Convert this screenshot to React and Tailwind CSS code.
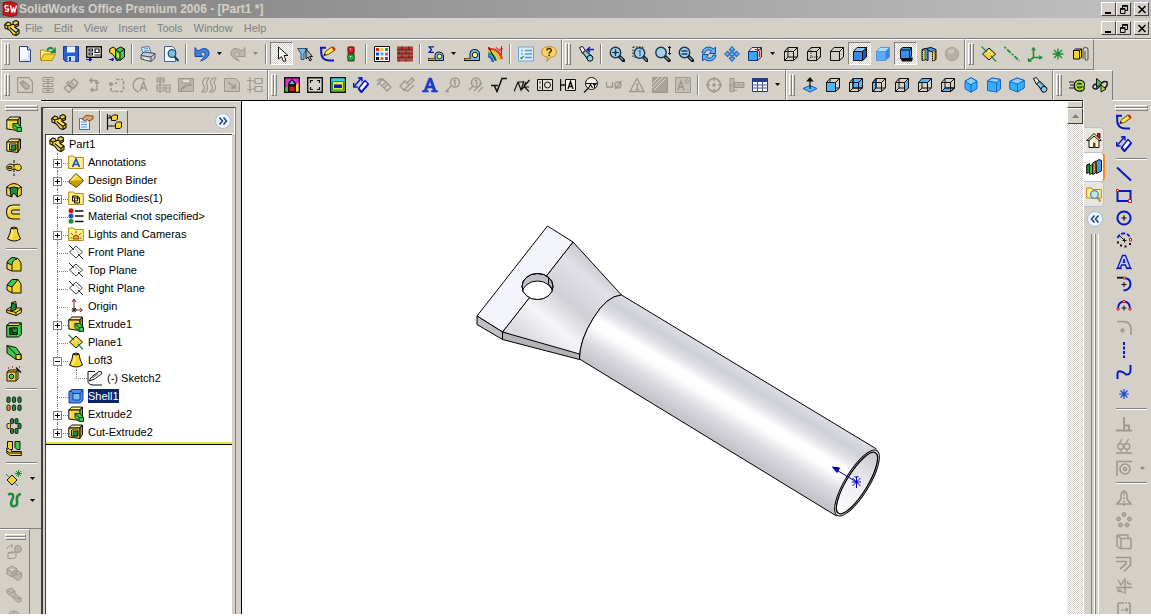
import React from "react";

const K = "#101010";
const Y = "#f4d430";
const YL = "#fff08c";
const YD = "#c89a10";
const B = "#1e50c8";
const BL = "#58b4ff";
const N = "#0a18c0";
const G = "#1e8c3c";
const GL = "#40c850";
const R = "#d01818";
const D = "#9c988e";

function Cube({ f = "none", t = "none", s = "none", wire = false, dash, c = K, back = "none", left = "none", bottom = "none" }) {
  return (
    <g stroke={c} strokeLinejoin="round">
      {back !== "none" && <path d="M5 1.500h9.500v9.500H5z" fill={back} />}
      {left !== "none" && <path d="M1.500 5.500L5 1.500V11L1.500 15z" fill={left} />}
      {bottom !== "none" && <path d="M1.500 14.500L5 11h9.500L11 14.500z" fill={bottom} />}
      {wire && <path d="M5 1.500V11h9.500M5 11L1.500 14.500" strokeDasharray={dash} strokeWidth={dash ? 0.8 : 1} />}
      <path d="M1.500 5.500h9v9h-9z" fill={f} />
      <path d="M1.500 5.500L5 1.500h9.500L10.500 5.500z" fill={t} />
      <path d="M10.500 5.500l4-4V11l-4 3.500z" fill={s} />
    </g>
  );
}

function Lens({ children, x = 6.5, y = 6.5 }) {
  return (
    <g>
      <path d={`M${x + 3.5} ${y + 3.5}l4.500 4.500`} stroke={K} strokeWidth="3.400" strokeLinecap="round" />
      <path d={`M${x + 4.5} ${y + 4.5}l3 3`} stroke="#5c9ab0" strokeWidth="1.400" />
      <circle cx={x} cy={y} r="5.200" fill="#a4d0ec" stroke="#18384c" strokeWidth="1.400" />
      {children}
    </g>
  );
}

const tape = (
  <g>
    <path d="M6 14.500V7.500q0-3.500 3.500-4H11q4.500.5 4.500 4.500v6.500z" fill="#78b8e8" stroke={K} />
    <circle cx="11" cy="9" r="2.700" fill={YL} stroke={K} strokeWidth=".9" />
    <path d="M0 13.500h7" stroke={K} strokeWidth="3" />
    <path d="M.5 13.200h6.500" stroke={Y} strokeWidth="1.200" />
  </g>
);

const tapeSum = (
  <g>
    <path d="M7 14.500V9.500q0-3 3-3.500h1.500q4 .5 4 4v4.500z" fill="#78b8e8" stroke={K} />
    <circle cx="11.500" cy="10.500" r="2.300" fill={YL} stroke={K} strokeWidth=".8" />
    <path d="M0 13.500h8" stroke={K} strokeWidth="3" />
    <path d="M.5 13.200h7" stroke={Y} strokeWidth="1.200" />
    <path d="M6 .8H1.200L3.500 3.500 1.200 6.300H6" stroke={N} strokeWidth="1.300" />
  </g>
);

const pencilArc = (
  <g>
    <path d="M0 1.800h6M1.200 2v4.500q0 7.500 8 8H14" stroke={N} strokeWidth="2" />
    <path d="M4 9.500l1.500-4L12 .8l3 3.200-6.500 4.500z" fill={Y} stroke="#7a4a10" />
    <path d="M6 7.500l6-4.500" stroke={YL} strokeWidth="1.200" />
    <path d="M12.500 1l2.500 3" stroke={R} strokeWidth="2" />
    <path d="M3.500 10l2.500-1-1.500-2z" fill={K} />
  </g>
);

const part = (
  <g stroke={K} strokeLinejoin="round" strokeWidth="1.100">
    <path d="M.8 4.500l3-2.500 2.700 1 .5 2 2-.7V2l3-1.500 2.500 1.500v3.500L11 7.500l4 2.500v3.500l-3 2-3-1L5.500 10 1 8z" fill={Y} />
    <path d="M.8 4.500l3 1.500L7 5M3.800 6v3M9 4.300l2.500 1 3-1.800M11 5v2.500M6 7.500l6 5 3-2.500M12 12.500v3" fill="none" />
    <path d="M7.500 7l5 4" stroke={YL} strokeWidth="1.300" />
  </g>
);

const boxY = (
  <g stroke={K} strokeLinejoin="round">
    <path d="M.8 4l3-3h10.500L12 4z" fill={YL} />
    <path d="M.8 4H12v10.500L.8 13z" fill={Y} />
    <path d="M12 4l2.500-3v9.500L12 14z" fill={YD} />
    <path d="M2.500 5.500v6" stroke={YL} strokeWidth="1.300" />
  </g>
);

const folder = <path d="M.7 14.500V2h5l1 1.500h8.600v11z" fill={YL} stroke="#b88a10" />;
const bigPlane = (fill, c) => <path d="M8 2l6.500 6L8 14 1.500 8z" fill={fill} stroke={c} />;
const undoPath = "M1 1.500v9h8L6.300 7.700Q8.500 5 10.800 6.800 12.500 9.800 6.500 15 15.800 12 15 6 12.500-.5 4 5z";

const flash = (
  <g>
    <path d="M1.500 1.500l3-1 3.500 5-3.500 2z" fill="#e8f4ff" stroke={K} />
    <path d="M4.500 6.500l3.300-2.300 7.200 7-4 4z" fill="#5c9ab8" stroke={K} />
    <path d="M6.500 6.500l4.500 4.500" stroke="#a4e0ff" strokeWidth="1.300" />
    <circle cx="12" cy="12.300" r="2.900" fill="#88d0f0" stroke={K} />
  </g>
);

const icons = {
  part,
  logo: (
    <g>
      <path d="M1 1.500l8-1 6 2V14l-5.500 2L1 14z" fill="#c41414" stroke="#7c0808" strokeWidth=".6" />
      <path d="M6.500 5Q3 3.500 3 6t3.500 2Q7 11.500 3 10M8.500 4.500l1.500 7 1.500-5 1 5 2-7" stroke="#fff" strokeWidth="1.400" />
    </g>
  ),
  new: <g><path d="M2.500.5h8l3 3.500v11.500h-11z" fill="#f4faff" stroke="#2c4470" /><path d="M10.500.5V4h3" fill="#c4dcf4" stroke="#2c4470" /><path d="M12 6v8H5" stroke="#c4dcf4" strokeWidth="1.500" /></g>,
  open: (
    <g>
      <path d="M.5 14V4h4l1 1.500h6V8" fill={YL} stroke="#b88a10" />
      <path d="M.5 14.500L4 8h11.500L12 14.500z" fill={Y} stroke="#b88a10" />
      <path d="M7 4.500q3-4.500 6-1.500" stroke={G} strokeWidth="2.200" /><path d="M15.800 1v6h-6z" fill={G} />
    </g>
  ),
  save: <g><path d="M.5.5h15v15h-13l-2-2z" fill="#2860d0" stroke="#143c90" /><path d="M4 .5h8v6H4z" fill="#e8f4ff" /><path d="M4.500 10h7.500v5.500H4.500z" fill="#c4dcf4" /><path d="M6 11h2v4H6z" fill="#143c90" /></g>,
  mkdraw: <g stroke={K}><path d="M.7.700h14.600v10.600H.7z" fill="#fff" strokeWidth="1.400" /><path d="M3 3h3.500v2H3zM3 7h3.500v2H3zM9 3h4v3.500H9zM8.500 9h6" strokeWidth="1.200" /><path d="M0 13.500h5M3.500 11.800l2.500 1.700-2.500 1.700z" stroke={N} fill={N} /></g>,
  mkasm: (
    <g stroke={K} strokeLinejoin="round">
      <path d="M.7 3l3.300-2 3 2v3l3 3v4.500l-2 1.500-4-6.500-3.300-2z" fill={Y} />
      <path d="M6.500 4l5-3 4 2v8L11 14.500 6.500 12z" fill={GL} /><path d="M6.500 4l4.500 2.500L15.500 3M11 6.500v8" />
      <path d="M8 7l2 1v4L8 11z" fill={Y} stroke="none" />
      <path d="M0 13.500h4M3 12l2 1.500L3 15z" stroke={N} fill={N} />
    </g>
  ),
  print: (
    <g strokeLinejoin="round">
      <path d="M3 7L1.500 1.500 9 .5l2 6.500z" fill="#d8ecff" stroke="#4878a8" /><path d="M4 3l4-.5M4.500 5l4.500-.5" stroke="#4898d8" />
      <path d="M1 9l3-3 11 1.500V12l-4 3.500-10-2.500z" fill="#c8ccd4" stroke="#40485c" /><path d="M1 9.500l10 1.500 4-3.500M11 11v4" stroke="#40485c" /><path d="M4 12.500l5 1" stroke="#fff" />
    </g>
  ),
  preview: <g><path d="M1.500.5h8l3 3v12h-11z" fill="#f4faff" stroke="#4860a0" /><path d="M11.500 10.500l4 4.500" stroke="#1c3c64" strokeWidth="2.200" /><circle cx="9" cy="7.500" r="3.800" fill="#7cc0e8" stroke="#28506c" strokeWidth="1.300" /></g>,
  undo: <path d={undoPath} fill="#3c84e0" stroke="#1848a0" />,
  redo: <path d={undoPath} transform="translate(16 0) scale(-1 1)" fill="#bab6ae" stroke={D} />,
  select: <path d="M4.500 1v12l3-2.500 2 5 2.500-1-2-5h4z" fill="#fff" stroke={K} />,
  filter: <g><path d="M.5 2.500h10L7 7.500v6H4v-6z" fill="#7cb8e0" stroke="#28507c" /><path d="M9 3v10l2-2 1.800 4 1.700-1-1.800-3.500H15.500z" fill="#b0b8c0" stroke={K} /></g>,
  sketch: pencilArc,
  light: <g><path d="M4.500.5h7v15h-7z" fill="#604c28" /><circle cx="8" cy="4" r="3.200" fill="#e82020" stroke="#600" strokeWidth=".7" /><circle cx="8" cy="11.500" r="3.400" fill="#20b040" stroke="#043c0c" strokeWidth=".7" /><path d="M7 3h1M7 10.500h1" stroke="#fff" /></g>,
  palette: (
    <g><path d="M.5.5h15v15H.5z" fill="#fff" stroke={K} />
      {["#e02020", "#f0d020", "#20a040", "#2040e0", "#20c0d0", "#e040c0", "#101010", "#d07020", "#8030c0"].map((c, i) => (
        <path key={c} d={`M${2 + (i % 3) * 4.5} ${2 + Math.floor(i / 3) * 4.5}h3v3h-3z`} fill={c} />
      ))}
    </g>
  ),
  bricks: <g><path d="M0 .5h16v15H0z" fill="#b04030" /><path d="M0 4h16M0 8h16M0 12h16M5 .5V4M12 .5V4M2 4v4M9 4v4M5 8v4M12 8v4M2 12v3.500M9 12v3.500" stroke="#40201c" /><path d="M0 5h16M0 9h16M0 13h16" stroke="#d88478" strokeWidth=".6" /></g>,
  measure: tapeSum,
  mass: tape,
  rainbow: (
    <g strokeWidth="2.400">
      <path d="M1 3q11-1 14 10" stroke="#e04020" /><path d="M1 5q9-1 11.500 9" stroke="#f0c020" /><path d="M1 7.500q6 0 8 7.500" stroke="#20a050" /><path d="M1 10q4 1 5 6" stroke="#2060d0" />
      <path d="M9 1.500l6 4.500M14.500 0v9M12.500 3h4" stroke={R} strokeWidth="1" /><path d="M1.500 1l7 13" stroke={K} strokeWidth="1" />
    </g>
  ),
  options: <g><path d="M.5 1h15v14H.5z" fill="#dceefc" stroke="#6ca4d8" /><path d="M7 4.500h7M7 8h7M7 11.500h7" stroke="#5898d8" strokeWidth="1.400" /><path d="M2.500 11.500l1 1 2-2.500" stroke={G} strokeWidth="1.200" /><path d="M3 3.500h2v2H3zM3 7h2v2H3z" fill="#88b8e0" /></g>,
  help: <g><path d="M8 .7c5 0 7.300 2 7.300 5.300S13 11 9.500 11.300L6 15.300 6.500 11C3 10.500.7 9 .7 6S3 .7 8 .7z" fill="#f8d468" stroke="#c08c20" /><path d="M5.800 4.500c0-3 4.700-2.500 4.500 0-.2 1.500-2.100 1.300-2.100 3.200M8.200 8.600v1.600" stroke="#483008" strokeWidth="1.600" /></g>,
  prev: <g>{flash}<path d="M9 3.500h7M12 1L9.300 3.500 12 6" stroke={N} strokeWidth="1.400" /></g>,
  zoomfit: <Lens><path d="M6.500 3v7M3 6.500h7" stroke="#18384c" strokeWidth="1.200" /><path d="M6.500 4.500l2 2-2 2-2-2z" fill="#18384c" /></Lens>,
  zoomarea: <g><path d="M1 1h10v10H1z" stroke={K} strokeDasharray="1.500 1.500" /><Lens x={7.5} y={7}><path d="M6.500 5.500l1.500-1V10" stroke="#2868a8" strokeWidth="1.300" /></Lens></g>,
  zoominout: <g><Lens x={6} /><path d="M14.500 .5v8M13 2L14.500.5 16 2M13 7L14.500 8.500 16 7" stroke={K} /></g>,
  zoomsel: <Lens><path d="M3.500 5h6M3.500 8h6" stroke="#183c58" strokeWidth="1.500" /></Lens>,
  rotate: <g fill={BL} stroke="#184898"><path d="M1 7C1.500 1 8.500-.5 12.500 3l2-2V7.500H8.500L10.500 5C7.500 3 4.500 4 4 7z" /><path d="M15 9c-.5 6-7.500 7.500-11.500 4l-2 2V8.500h6L5.500 11C8.500 13 11.500 12 12 9z" /></g>,
  pan: <path d="M8 .5L11 4H9v3h3V5l3.500 3L12 11V9H9v3h2l-3 3.500L5 12h2V9H4v2L.5 8 4 5v2h3V4H5z" fill={BL} stroke="#184898" strokeWidth=".9" />,
  views: <g><Cube f="#38a4ff" s="#e8b8b0" t="#f4e4e0" c="#203060" /><path d="M10.500 1v5M8 3.500h6M12.500 5v6" stroke={R} /></g>,
  wire: <Cube wire />,
  hidvis: <Cube wire dash="1.500 1" />,
  hidrem: <Cube />,
  shadeedge: <Cube f="#3888e8" t="#8cc8ff" s="#1858b0" />,
  shade: <Cube f="#58acf8" t="#b0dcff" s="#3c84d8" c="#5098e0" />,
  shadow: <g><path d="M2 11.500h13l-1 4H4z" fill={K} /><path d="M2.500 4l2-2.500h9V10l-2 2.500h-9z" fill="#3c8cec" stroke={K} /><path d="M2.500 4h9l2-2.500M11.500 4v8.500" stroke={K} /></g>,
  section: <g stroke={K}><path d="M5 2.500q5-2.500 10 1v10l-3.500 1.500V6Q8 4 5 5.500z" fill="#4898e8" /><path d="M1 3.500q3-2 6 0v11q-3-2-6 0z" fill="#4898e8" /><path d="M1.500 4h2.500v10H1.500zM11.500 5H14v9.500h-2.500z" fill={Y} strokeDasharray="1 1" /></g>,
  sphere: <g><circle cx="8" cy="8" r="6.800" fill="#b4b0a8" stroke="#a8a49c" /><ellipse cx="7" cy="5.500" rx="3" ry="2.200" fill="#cac6be" /></g>,
  plane: <g>{bigPlane(Y, K)}<path d="M.5.500L6 6M10 10l5 5.500" stroke={G} strokeWidth="1.200" /><path d="M5 8l3-3 3 3" stroke="#fff" /></g>,
  axis: <path d="M.5 1L15.500 15" stroke={G} strokeWidth="1.800" strokeDasharray="2 1.500 5 1.500" />,
  coord: <g stroke={G} strokeWidth="1.600"><path d="M6.500 2v9.500h8M6.500 11.500L2 15" /><path d="M4.500 4l2-3 2 3zM12.500 9.500l3 2-3 2zM1 12v3.500h3.500z" fill={G} strokeWidth=".5" /></g>,
  point: <path d="M8 2.500v11M2.500 8h11M4 4l8 8M12 4l-8 8" stroke={G} strokeWidth="1.400" />,
  attach: <g stroke={K}><path d="M.5 4.500L2.500 3h6v8l-2 2h-6z" fill={Y} /><path d="M.5 4.500h6V13M6.500 4.500l2-1.500" /><path d="M10 13V3q2.500-3.500 5 0v10q-1.700 2.500-3 0V5" stroke="#606060" strokeWidth="1.200" /></g>,

  g1: <g stroke={D} strokeWidth="1.200"><path d="M.6.600h11l3.800 4v10.800H.6z" /><path d="M3 5.500l3-1.500 6 4.500v3l-3 1-5-5zM6 4.500v3" fill="#b8b4ac" /></g>,
  g2: <g stroke={D}><path d="M3 .5h10v4H3zM3 6.500h10v3H3zM3 11.500h10v4H3z" /><path d="M5 2.500h6M5 13.500h6M8 0v16" /></g>,
  g3: <path d="M1 11l4-3 4 4-3 3.500zM6 7l5-5 4 4-5 5zM3 7l3-3M10 12l4-4M8 5l3 3" stroke={D} strokeWidth="1.400" />,
  g4: <path d="M4 3.500h7v3M9 5l2 2 2-2M11 8v5H5M7 11l-2 2 2 2M6 1L4 3.500 6 6" stroke={D} strokeWidth="1.400" />,
  g5: <path d="M7 2.500h7M14.500 4v9.500M6 14.500h8M2 6v8.500h3M0 8l2-3 2 3M7 5v2" stroke={D} strokeWidth="1.600" strokeDasharray="3.500 1.500" />,
  g6: <g stroke={D} strokeWidth="1.400"><path d="M13 3A7 7 0 1 0 7 15" /><path d="M8 14l3.500-9L15 14M9.500 11h4" /></g>,
  g7: <g stroke={D} strokeWidth="1.200"><path d="M2 1h7v4H2zM2 8h7v6H2zM5 0v16M11 8h4v7h-4zM11 11h4" /><path d="M2 3h7M2 11h7" /></g>,
  g8: <g stroke={D}><path d="M.5 1.500h15v13H.5z" fill="#bcb8b0" /><path d="M4 2h8v4H4z" fill="#e0dcd4" /><path d="M2 14q5-7 12-6" strokeWidth="1.600" /></g>,
  g9: <path d="M4 1q-4 4-1.500 7T1 15h4q2.500-4 1-7T8 1zM12 1q-4 4-1.500 7T9 15h3q4-4 2-7t1-7z" stroke={D} strokeWidth="1.200" />,
  g10: <g stroke={D}><path d="M.5 1.500h11l4 4v9H.5z" fill="#c4c0b8" /><path d="M4 5l7 6M11 7v4H7" strokeWidth="1.400" /></g>,
  g11: <path d="M3 0v16M0 3.500h5M0 12.500h5M8 1.500h7v5H8zM8 9.500h7v5H8zM5 4h3M5 12h3" stroke={D} strokeWidth="1.200" />,

  m1: <g><path d="M.7.700h14.600v14.600H.7z" fill="#f020e0" stroke={K} strokeWidth="1.400" /><path d="M1.400 10h3v4.600h-3z" fill="#40c040" /><path d="M11.500 8l3-2v8.600h-3z" fill="#f0e020" /><path d="M4 15V6l4-4 4 4v9z" fill={K} /><path d="M5.500 7L8 3.500 10.500 7z" fill="#30d8f0" /><path d="M5.500 9.500h5V14h-5z" fill={R} /></g>,
  m2: <g stroke={K}><path d="M.7.700h14.600v14.600H.7z" strokeWidth="1.400" fill="#d8d4cc" /><path d="M3.500 6V3.500h2.500M10 3.500h2.500V6M12.500 10v2.500H10M6 12.500H3.500V10" strokeWidth="1.200" /></g>,
  m3: <g><path d="M.7.700h14.600v14.600H.7z" fill="#90e838" stroke={K} strokeWidth="1.400" /><path d="M1.500 1.500h13v3h-13z" fill="#38d0f0" /><path d="M2.500 4.500h11v8.500h-11z" fill="#f0e838" stroke={G} /><path d="M4 7.500h8v3.500H4z" fill={N} /></g>,
  smartdim: (
    <g stroke={N} strokeLinejoin="round">
      <path d="M5.500 11.500l6.500-8 3.300 3.500-7 8.200z" fill="#fff" strokeWidth="1.300" />
      <path d="M5.500 11.500l3 3.700 6.800-8.200" strokeWidth="2" />
      <path d="M1.500 9L8 1.500" strokeWidth="1.400" />
      <path d="M.7 6v4h4M5 1l3.800-.3L9 4.500" strokeWidth="1.500" />
    </g>
  ),
  m5: <path d="M1 8l5-6 2 2M3 6l8 8 4-4-8-8M6 9l4-4M8 11l4-4M1 4l4-3" stroke={D} strokeWidth="1.300" />,
  m6: <path d="M1 9l5-5 4 4-5 5zM8 6l5-5 2 2-6 6M5 13l4 1 6-6" stroke={D} strokeWidth="1.300" />,
  note: <path d="M7 1h2.500l4.500 12.500h1.500V15H9.500v-1.500h1.700L10.300 11H5.500l-.9 2.500h1.700V15H.5v-1.500h1.600zM6.200 9h3.500L8 4.200z" fill="#1a3cd0" stroke="#1a3cd0" strokeWidth=".6" />,
  m8: <g stroke={D} strokeWidth="1.400"><circle cx="10" cy="5.500" r="4.500" /><path d="M8.500 4l1.500-1v5.500M6.500 8.500L1 14.500h3" /></g>,
  m9: <g stroke={D} strokeWidth="1.400"><circle cx="8" cy="5.500" r="4.500" /><path d="M7 4l1.500-1v5.500M5 9l-4 4M6 14l8-8M10 15l5-5" /></g>,
  finish: <path d="M3.500 9l2.500 5.500L11 1.500h5M0 8.500h7" stroke={K} strokeWidth="1.500" />,
  weld: <path d="M0 14.500L4 5h6M4 5l3 8L10 4M7 13l3-3h5M15.500 3L10 9.500l5 5M12 5l-2 4" stroke={K} strokeWidth="1.200" />,
  m12: <g stroke={K}><path d="M.5 2.500h15v11H.5zM5.500 2.500v11" fill="#e4e0d8" /><circle cx="10.500" cy="8" r="3" /><path d="M3 4.500v2M3 9.500v2" /></g>,
  datum: <g stroke={K}><path d="M5.500 2.500h10v11h-10z" fill="#f4f0e8" /><path d="M.5 2v12M0 8h5.500M8 12l2.500-7.500L13 12M9 9.500h3" strokeWidth="1.400" /></g>,
  datumt: <g stroke={K}><circle cx="8.500" cy="6.500" r="6" fill="#f4f0e8" /><path d="M2.500 6.500h12M5 11.500L1 15.500M5.500 11L7.500 7.500l2 3.500M11.500 7.500V11M10 7.500h3" strokeWidth="1.200" /></g>,
  m15: <g stroke={D} strokeWidth="1.300"><path d="M.5 5v5h6V5" /><circle cx="12" cy="8" r="3" /><path d="M9 12l6.500-8" /></g>,
  m16: <g stroke={D} strokeWidth="1.300"><path d="M8 1.500l7 13H1z" /><path d="M7 8l1.500-1v5.500M6.500 12.500H10" /></g>,
  m17: <g><path d="M.5.500h15v15H.5z" fill="#a8a49a" stroke={D} /><path d="M0 11L11 0M0 7l7-7M2 13L14 1" stroke="#d8d4cc" /></g>,
  m18: <g stroke={D}><path d="M.5.500h15v15H.5z" fill="#c4c0b8" /><path d="M3 13l3-9 3 9M4 10h4" strokeWidth="1.400" /><circle cx="12" cy="4.500" r="1.800" /></g>,
  m19: <g stroke={D} strokeWidth="1.500"><circle cx="8" cy="8" r="6.500" /><path d="M8 0v4M8 12v4M0 8h4M12 8h4M6 8h4M8 6v4" /></g>,
  m20: <g stroke={D}><path d="M1 1.500h4v13H1zM5 5.500h10v5H5z" fill="#bcb8b0" /><path d="M0 8h16M5 13.500h4" strokeDasharray="3 1" /></g>,
  table: <g><path d="M.5 1.500h15v13H.5z" fill="#fff" stroke="#203878" /><path d="M.5 1.500h15V5H.5z" fill="#203c98" /><path d="M.5 8h15M.5 11h15M5.500 5v9.500M10.500 5v9.500" stroke="#485c88" /></g>,
  normal: <g><path d="M8 8.500l7 3-7 3.500-7-3.500z" fill={BL} stroke="#1858b0" /><path d="M8 12V1.500M5.500 4L8 1l2.500 3z" stroke={K} strokeWidth="1.200" fill={K} /></g>,
  vfront: <Cube f="#50b4ff" wire />,
  vback: <Cube back="#50b4ff" wire />,
  vleft: <Cube left="#50b4ff" wire />,
  vright: <Cube s="#50b4ff" wire />,
  vtop: <Cube t="#50b4ff" wire />,
  vbottom: <Cube bottom="#50b4ff" wire />,
  iso: <g stroke="#1468c0"><path d="M8 .7l6 3.500v7.500L8 15.300 2 11.700V4.200z" fill="#38acff" /><path d="M8 .7l6 3.500-6 3.500-6-3.500z" fill="#8cd4ff" /><path d="M8 7.700v7.600" /></g>,
  tri: <g stroke="#1468c0"><path d="M1.500 4L6 1l8.500 1.500V12l-4 3-9-1.500z" fill="#38acff" /><path d="M1.500 4L6 1l8.500 1.500-4 3z" fill="#8cd4ff" /><path d="M10.500 5.500V15" /></g>,
  dim: <g stroke="#1468c0"><path d="M.7 4.500L8 1l7.300 2.500V11L8.500 15 .7 12z" fill="#38acff" /><path d="M.7 4.500L8 1l7.300 2.500-6.800 3.500z" fill="#8cd4ff" /><path d="M8.500 7v8" /></g>,
  flash,
  edraw: <g><path d="M0 5h5M1 8h4M0 11h5" stroke={K} /><path d="M14.500 10.500C13 14 6.500 14 6.500 8.500S14.500 3 14.500 8.500H8" stroke={K} strokeWidth="3.800" /><path d="M14.300 10.500C13 13.500 6.800 13.500 6.800 8.500S14.300 3.500 14.300 8.500H8" stroke="#a8dc38" strokeWidth="1.900" /></g>,
  eanim: <g stroke={K}><path d="M1 11q4 3 7-2.500T15 5q1 5-3 6M1 11q-.5-4 4-4" strokeWidth="1.400" /><path d="M4.500 1.500L10 6l-5.500 4.500z" fill={GL} /><path d="M9 15V8l5 4z" fill="#a8dc38" /></g>,

  extrude: <g>{boxY}<path d="M7 7.500h5l3.500 4v4H11l-4-4z" fill={GL} stroke="#0c3c14" /><path d="M7 7.500l4 4h4.500M11 11.500v4" stroke="#0c3c14" /></g>,
  cut: <g>{boxY}<path d="M3.500 6h6.500v6H3.500z" fill="#fff4b0" stroke={K} /><path d="M5 7.500h4.500V12H5z" fill={G} stroke={K} strokeWidth=".7" /></g>,
  revolve: <g stroke={K}><path d="M8 5c5-2 7 0 7.300 2.500S13 11 11 10.500L9 9H7l-2 1.500C3 11 .7 10 .7 7.500S3 3 8 5z" fill={Y} /><path d="M8 0v16" strokeDasharray="3 1.500" /><ellipse cx="4" cy="7.500" rx="2" ry="1.200" fill={YD} /></g>,
  revcut: <g stroke={K}><path d="M.7 5q7.300-7 14.600 0v8L11 15V9q-3-2-5 0v6L.7 13z" fill={Y} /><path d="M4 6q4-2 8 0l-1 8.500L8 11l-3 3.500z" fill={G} /><path d="M.7 5Q4 7 5 6M15.300 5Q12 7 11 6" /></g>,
  sweep: <g><path d="M14 3.500H7Q3 3.500 3 8t4 4.500h7" stroke={K} strokeWidth="6" /><path d="M14 3.500H7Q3 3.500 3 8t4 4.500h7" stroke={Y} strokeWidth="4" /><path d="M13 2.500H7Q2.500 2.500 2 8" stroke={YL} strokeWidth="1.200" /></g>,
  loft: <g stroke={K}><path d="M5 2q3-2 6 0l1 5 2.500 6q-6 4-13 0L4 7z" fill={Y} /><path d="M5 2q3 2 6 0" /><path d="M6.500 4v4l-2 5" stroke={YL} strokeWidth="1.500" /></g>,
  fillet: <g stroke={K}><path d="M1 7l5-5.500 6 1L15 7v8H6L1 13z" fill={Y} /><path d="M1 7Q3 1.500 8 1.500L11 3Q6 4 6 9z" fill={GL} /><path d="M6 9v6" /></g>,
  chamfer: <g stroke={K}><path d="M1 7l5-5.500h6L15 6v9H6L1 12z" fill={Y} /><path d="M1 7l5-5.500h6L6 9z" fill={GL} /><path d="M6 9v6" /></g>,
  rib: <g stroke={K}><path d="M.7 9.500l5-3V2.500l4-1 1 6.500h4.600v4.500l-5 3L.7 12.500z" fill={Y} /><path d="M6 3l4 1.500v5L4.500 11z" fill={G} /><path d="M.7 10l9.300 2.500 5.300-3.500M10 12.500v3" /></g>,
  shell: <g stroke={K}><path d="M.7 3.500l3-2.500h11.600v11.500L12.500 15H.7z" fill={GL} /><path d="M.7 3.500l3-2.500h11.600l-2.800 2.500z" fill={Y} /><path d="M3.500 6h8v6.500h-8z" fill="#105820" /><path d="M6 6h5.500v4.500H6z" fill={G} /></g>,
  draft: <g stroke={K}><path d="M1 1.500l9 2 5 7v5h-5L1 9z" fill={GL} /><path d="M10 10.500h5v5h-5z" fill={Y} /><path d="M1 1.500l9 9" /></g>,
  hole: <g stroke={K}><path d="M1 6l2-2h9v9l-2 2H1z" fill={Y} /><path d="M1 6h9v9M10 6l2-2" /><circle cx="5.500" cy="10.500" r="2.300" fill={GL} /><path d="M10 1.500l5 5" strokeWidth="1.500" /><path d="M2 2h1M6 1h1M13 1h1" stroke={R} strokeWidth="1.500" /></g>,
  lpat: (
    <g stroke={K} strokeWidth=".9">
      {[2.5, 8, 13.5].map((x, i) => (
        <g key={x}><rect x={x - 1.6} y="1" width="3.200" height="5.500" rx="1.300" fill={G} /><rect x={x - 1.6} y="9" width="3.200" height="5.500" rx="1.300" fill={i ? G : "#f09020"} /></g>
      ))}
    </g>
  ),
  cpat: (
    <g stroke={K} strokeWidth=".9" fill={G}>
      <rect x="4.500" y=".7" width="3" height="5" rx="1" /><rect x="9" y=".7" width="3" height="5" rx="1" /><rect x="4.500" y="10.500" width="3" height="5" rx="1" /><rect x="9" y="10.500" width="3" height="5" rx="1" /><rect x="12" y="5.500" width="3" height="5" rx="1" /><rect x="1" y="5.500" width="3.500" height="5" rx="1" fill={Y} />
    </g>
  ),
  mirror: <g stroke={K}><path d="M.8 8v5l3.500 2.500h11V11.500H5.500V8z" fill={Y} /><path d="M1.500 1.500h5v8h-3l-2-2z" fill={Y} /><path d="M9 1.500h5v8h-3l-2-2z" fill={GL} /><path d="M.8 11l3 2h11.500" /></g>,
  refgeo: <g><path d="M6 5l5 5-5 5-5-5z" fill={Y} stroke={K} /><path d="M0 4l3 3M9 13l3 3M12.500 0v7M9 3.500h7M10 1l5 5M15 1l-5 5" stroke={G} /></g>,
  curves: <path d="M2 2.500q6-2.500 5 3Q3 14 7.500 14.300 12 14.500 11 9q-1-6 4-7" stroke={G} strokeWidth="2.600" />,
  a1: <g stroke={D}><path d="M1 6q1-4 6-3M5 1l2 2-2 2M2 10l2-1h6v5l-2 1.500H2zM2 10h6" /><circle cx="12" cy="6" r="3.500" fill="#b8b4ac" /></g>,
  a2: <g stroke={D} fill="#bcb8b0"><path d="M1 4l5-3 5 3v5l-5 3-5-3zM8 8l4-2 3.500 2v5L12 15.500 8 13zM1 4l5 3 5-3M6 7v5M8 8l4 2 3.500-2" /></g>,
  a3: <g stroke={D} fill="#bcb8b0"><path d="M1 3l4-2 4 3v3l6 4v3l-3 1.500L6 10 1 6z" /><path d="M1 3l4 3 4-2M7 9l5 3 3-1" fill="none" /></g>,
  a4: <g stroke={D} fill="#bcb8b0"><circle cx="8" cy="8" r="6" /><path d="M3 8h10M8 3v10" /></g>,

  line: <path d="M1 1.500l14 13" stroke={N} strokeWidth="2" />,
  rect: <g><path d="M1.500 3h13v10h-13z" stroke={N} strokeWidth="2" /><path d="M12.500 11.500h3v3h-3zM.5 1.500h2v2h-2z" fill="#fff" stroke={R} /></g>,
  circle: <g><circle cx="8" cy="8" r="6.600" stroke={N} strokeWidth="2" /><path d="M5.500 8h5M8 5.500v5" stroke={K} strokeWidth="1.200" /></g>,
  arc: <g><path d="M1.500 6q2-5 7-4.500 6 1 5.500 6" stroke={N} strokeWidth="1.800" strokeDasharray="4 1.500" /><path d="M3 3.500l6 5M6.500 8.500h4M8.500 6.500v4" stroke={K} /><path d="M1 10.500h2M4 13.500h2M8.500 14.500h2M13 12h2" stroke={K} strokeWidth="1.800" /><path d="M13.500 6.500h2v2.500h-2z" fill="#fff" stroke={R} /></g>,
  text: <g><path d="M6.500 1.500h3l5 12.500h-4l-1-3h-4l-1 3h-3z" fill="#c4ccec" stroke={N} strokeWidth="1.300" /><path d="M7 8.500l1-3.500 1 3.500zM0 14.700h6M10 14.700h6" stroke={N} /></g>,
  tarc: <g><path d="M1 1.700h7" stroke={K} strokeWidth="1.800" /><path d="M8.500 2q6 .5 6 6.200-.3 5.500-7 6.300" stroke={N} strokeWidth="2" /><path d="M5.500 8.500h5M8 6v5" stroke={K} /><path d="M7.500 1h2v2h-2z" fill="#fff" stroke={R} /></g>,
  arc3: <g><path d="M2 11Q2 4 8 3.500 14 4 14 11" stroke={N} strokeWidth="2" /><path d="M5.500 10h5M8 7.500v5" stroke={K} /><path d="M1 10h2v2H1zM13 10h2v2h-2zM7 2.500h2v2H7z" fill="#fff" stroke={R} /></g>,
  sfillet: <path d="M1 1.500h6q8 0 8 8V15M4 10.500h5M6.500 8v5" stroke={D} strokeWidth="1.600" />,
  center: <path d="M8 0v16" stroke={N} strokeWidth="2" strokeDasharray="3 1.500" />,
  spline: <path d="M1.500 15v-5Q1.500 6.500 5 7.500t5 3Q14.500 11 14.500 6V1" stroke={N} strokeWidth="2" />,
  spoint: <path d="M8 3v10M3 8h10M4.500 4.500l7 7M11.500 4.500l-7 7" stroke="#1c48d8" strokeWidth="1.200" />,
  perp: <path d="M8 1v13M0 14.500h16M8 9.500h5V14" stroke={D} strokeWidth="1.800" />,
  rel: <g stroke={D} strokeWidth="1.300"><circle cx="4.500" cy="8.500" r="2.800" /><circle cx="11" cy="8.500" r="2.800" /><path d="M3 6l3-5M9.500 6l3-5M11 11v3M5 11v3M0 15h16" /></g>,
  quick: <g stroke={D} strokeWidth="1.600"><path d="M1 16V1.500h15" /><circle cx="9" cy="9" r="5" /><circle cx="9" cy="9" r="1.500" /></g>,
  smir: <g stroke={D} strokeWidth="1.500"><path d="M5 9V6q0-4 3-4.500Q11 2 11 6v3l4 5H1z" /><path d="M8 0v16" strokeDasharray="2 1.500" /></g>,
  spat: <g fill="#b0aca4" stroke={D}><circle cx="8" cy="2.500" r="2" /><circle cx="2.500" cy="7" r="2" /><circle cx="13.500" cy="7" r="2" /><circle cx="4.500" cy="13" r="2" /><circle cx="11" cy="13" r="2" /></g>,
  conv: <g stroke={D} strokeWidth="1.400"><path d="M1 1h11v3M1 1v11l4 3M5 4.500h10v10H5zM1 1l4 3.500" /></g>,
  offset: <path d="M0 1.500h14.500V9L8 15.500M0 5.500h10V8l-6 5" stroke={D} strokeWidth="1.700" />,
  trim: <path d="M0 9.500h16M9 0v16M2 2l3 5 3-5M3 11l4 4M12 3q-2 3 3 3M5 13q-4 2-3-2" stroke={D} strokeWidth="1.400" />,
  constr: <g stroke={D} strokeWidth="1.600"><path d="M2 3v13M2 3h6M14 3v13" /><path d="M9 3h6M5 10h7M10 8l2 2-2 2" strokeDasharray="2 1" /></g>,

  annot: <g>{folder}<path d="M4.500 13L8 5l3.500 8M6 10.500h4" stroke={B} strokeWidth="1.700" /></g>,
  binder: <g stroke="#604400"><path d="M1 9l7-7.500L15 8l-6.500 7z" fill={Y} /><path d="M1 9v1.500l7.500 5L15 9.500V8" fill={YD} /><path d="M4 8l4.500-4.500" stroke={YL} strokeWidth="1.500" /></g>,
  bodies: <g>{folder}<path d="M4.500 6h5v5h-5zM6.500 8h5v5h-5zM4.500 6l2 2M9.500 6l2 2" stroke={K} /></g>,
  material: <g><path d="M7 3h8.500M7 8h8.500M7 13.500h8.500" stroke={K} strokeWidth="1.400" /><circle cx="3" cy="2.800" r="2.500" fill={R} /><circle cx="3" cy="8" r="2.500" fill={B} /><circle cx="3" cy="13.200" r="2.500" fill={G} /></g>,
  lights: <g>{folder}<path d="M5 13q0-4 3-4t3 4zM8 5v2.500M3 7l2 2M13 7l-2 2M2.500 12H4M12 12h1.500" stroke="#a04800" fill="#f0a020" /></g>,
  tplane: <g>{bigPlane("#fff", "#404040")}<path d="M1 1l5 5M10 10l5 5" stroke={K} strokeWidth=".9" /><path d="M7 4.500l4.500 4.500" stroke="#808080" strokeWidth=".8" /></g>,
  origin: <g stroke="#901818"><path d="M6 2v10h8M4 4l2-3 2 3M12 10l2.500 2-2.500 2" /><path d="M3.500 12h5M6 9.500v5M4 10l4 4M8 10l-4 4" stroke={K} strokeWidth=".8" /></g>,
  tsketch: <g stroke={K}><path d="M1 1.500h7M1 1.500v10q0 3 5 3.500h9" /><path d="M2 11l2.500-4L12 1.500q3-.5 3 2L7.500 9z" fill="#fff" /><path d="M5 8l6-4" strokeWidth=".7" /></g>,
  tshell: <g stroke="#143c90"><path d="M1 3.500l3-2h11v11L12 15H1z" fill="#4890e8" /><path d="M5 5.500h7v6.500H5z" fill="#7cbcf8" /><path d="M1 3.500h2.500l1.500 2M12 5.500l3-4" /></g>,
  prop: <g><path d="M1.500 4.500h10v11h-10z" fill="#e4f0fc" stroke="#3878c0" /><path d="M3 8h6M3 10.500h6M3 13h6" stroke="#58a0e0" /><path d="M4 5l4-3.500 7 .5v3l-4 2-2-1.500-2 1.500z" fill="#e0a468" stroke="#7c4c1c" /></g>,
  config: <g stroke={K}><path d="M1.500 0v16M1.500 4h4M1.500 12h4M4 1v3" strokeWidth="1.200" /><path d="M5.500 2.500l2-1.500h4v4l-1.500 1.500H5.500zM9.500 9.500l2-1.500h4v5l-1.500 1.500H9.500z" fill={Y} /><path d="M5 12h4" /></g>,
  home: <g><path d="M3 8v7.500h10V8" fill="#fffcdc" stroke={K} /><path d="M11.500 1.500h2.500V6l-2.500-2z" fill={R} stroke="#700" /><path d="M.7 8.500L8 1.500l7.300 7H13L8 4 3 8.500z" fill="#fff490" stroke={K} /><path d="M7 10.500h2.500v5H7z" fill="#804018" /></g>,
  library: <g stroke={K}><path d="M.7 6l3-1.500V13l-3 1.500z" fill={G} /><path d="M3.700 7l3-1.500V14l-3 1.500z" fill={GL} /><path d="M6.700 4l3.300-2v11.500l-3.300 2z" fill={YD} /><path d="M10 2.500l3-2 2.500 1V12l-5 2.500z" fill="#4898e8" /></g>,
  search: <g><path d="M.7 12V2h5l1 1.500h8.600V12z" fill={YL} stroke="#b88a10" /><path d="M11 11l3.500 4.500" stroke="#d08840" strokeWidth="2.200" /><circle cx="8.500" cy="8.500" r="3.800" fill="#c4e4f8" stroke="#4888b8" strokeWidth="1.300" /></g>,
};

function Icon({ name, className = "size-4" }) {
  return (
    <svg viewBox="0 0 16 16" fill="none" aria-hidden="true" className={`${className} shrink-0`}>
      {icons[name]}
    </svg>
  );
}

const dither = "bg-[repeating-conic-gradient(#ffffff_0_25%,#d4d0c8_0_50%)] bg-[length:2px_2px]";

function Tool({ name, pressed, vertical }) {
  const size = vertical ? "h-[22px] w-[24px]" : "h-[23px] w-[23px]";
  const look = pressed ? `border border-t-[#808080] border-l-[#808080] border-b-white border-r-white ${dither}` : "";
  return (
    <button type="button" aria-label={name} aria-pressed={pressed} className={`flex shrink-0 items-center justify-center ${size} ${look}`}>
      <Icon name={name} />
    </button>
  );
}

function Drop({ muted }) {
  return (
    <button type="button" aria-label="More" className="flex h-[22px] w-[13px] shrink-0 items-center justify-center">
      <svg viewBox="0 0 5 3" className="h-[3px] w-[5px]"><path d="M0 0h5L2.500 3z" fill={muted ? "#8c887e" : "#000"} /></svg>
    </button>
  );
}

function Items({ list, vertical }) {
  return list.map((it, i) => {
    if (it === "|")
      return vertical ? (
        <div key={i} className="flex h-2 w-full shrink-0 items-center px-1"><div className="h-[2px] w-full border-t border-[#808080] border-b border-b-white" /></div>
      ) : (
        <div key={i} className="flex h-[20px] w-2 shrink-0 justify-center"><div className="w-[2px] border-l border-[#808080] border-r border-r-white" /></div>
      );
    if (it === "v" || it === "V") return <Drop key={i} muted={it === "V"} />;
    if (it[0] === "*") return <Tool key={i} name={it.slice(1)} pressed />;
    return <Tool key={i} name={it} vertical={vertical} />;
  });
}

function Bar({ label, list }) {
  return (
    <div role="toolbar" aria-label={label} className="flex h-[31px] shrink-0 items-center border border-t-white border-l-white border-r-[#808080] border-b-[#808080] pr-px pb-[2px]">
      <div className="mr-[3px] ml-[2px] flex">
        <div className="h-[22px] w-[3px] border border-t-white border-l-white border-r-[#808080] border-b-[#808080]" />
        <div className="h-[22px] w-[3px] border border-t-white border-l-white border-r-[#808080] border-b-[#808080]" />
      </div>
      <Items list={list} />
    </div>
  );
}

function HGrip() {
  return (
    <div className="mx-[3px] flex shrink-0 flex-col self-stretch">
      <div className="h-[3px] border border-t-white border-l-white border-r-[#808080] border-b-[#808080]" />
      <div className="h-[3px] border border-t-white border-l-white border-r-[#808080] border-b-[#808080]" />
    </div>
  );
}

const row1 = [
  ["Standard", ["new", "open", "save", "mkdraw", "mkasm", "|", "print", "preview", "|", "undo", "v", "redo", "V", "|", "*select", "filter", "sketch", "light", "|", "palette", "bricks", "|", "measure", "v", "mass", "rainbow", "|", "options", "help"]],
  ["View", ["prev", "|", "zoomfit", "zoomarea", "zoominout", "zoomsel", "rotate", "pan", "views", "v", "wire", "hidvis", "hidrem", "*shadeedge", "shade", "*shadow", "section", "sphere"]],
  ["Reference", ["plane", "axis", "coord", "point", "attach"]],
];
const row2 = [
  ["Drawing", ["g1", "g2", "g3", "g4", "g5", "g6", "g7", "g8", "g9", "g10", "g11"]],
  ["Annotation", ["m1", "m2", "m3", "smartdim", "m5", "m6", "note", "m8", "m9", "finish", "weld", "m12", "datum", "datumt", "m15", "m16", "m17", "m18", "|", "m19", "m20", "table", "v"]],
  ["Standard views", ["normal", "vfront", "vback", "vleft", "vright", "vtop", "vbottom", "iso", "tri", "dim", "flash"]],
  ["eDrawings", ["edraw", "eanim"]],
];
const features = ["extrude", "cut", "revolve", "revcut", "sweep", "loft", "|", "fillet", "chamfer", "rib", "shell", "draft", "hole", "|", "lpat", "cpat", "mirror", "|"];
const sketchTools = ["sketch", "smartdim", "|", "line", "rect", "circle", "arc", "text", "tarc", "arc3", "sfillet", "center", "spline", "spoint", "|", "perp", "rel"];
const sketchTools2 = ["|", "smir", "spat", "conv", "offset", "trim", "constr"];

const tree = [
  ["annot", "Annotations", "+"],
  ["binder", "Design Binder", "+"],
  ["bodies", "Solid Bodies(1)", "+"],
  ["material", "Material <not specified>"],
  ["lights", "Lights and Cameras", "+"],
  ["tplane", "Front Plane"],
  ["tplane", "Top Plane"],
  ["tplane", "Right Plane"],
  ["origin", "Origin"],
  ["extrude", "Extrude1", "+"],
  ["plane", "Plane1"],
  ["loft", "Loft3", "-"],
  ["tsketch", "(-) Sketch2", "child"],
  ["tshell", "Shell1", "sel"],
  ["extrude", "Extrude2", "+"],
  ["cut", "Cut-Extrude2", "+"],
];

function TreeRow({ item, last }) {
  const [icon, text, kind] = item;
  const box = kind === "+" || kind === "-";
  const child = kind === "child";
  return (
    <li role="treeitem" className="flex h-[18px] items-center">
      <span className="relative h-[18px] w-[22px] shrink-0">
        <span className={`absolute top-0 left-[11px] border-l border-dotted border-[#808080] ${last ? "h-[10px]" : "h-[18px]"}`} />
        {!child && <span className="absolute top-[10px] left-[11px] w-[11px] border-t border-dotted border-[#808080]" />}
        {box && (
          <button type="button" aria-label={kind === "+" ? "Expand" : "Collapse"} className="absolute top-[6px] left-[7px] flex size-[9px] items-center justify-center border border-[#808080] bg-white">
            <svg viewBox="0 0 5 5" className="size-[5px]"><path d={kind === "+" ? "M0 2h5v1H0zM2 0h1v5H2z" : "M0 2h5v1H0z"} fill="#000" /></svg>
          </button>
        )}
      </span>
      {child && (
        <span className="relative h-[18px] w-[19px] shrink-0">
          <span className="absolute top-0 left-[8px] h-[10px] w-[11px] border-b border-l border-dotted border-[#808080]" />
        </span>
      )}
      <Icon name={icon} />
      <span className={kind === "sel" ? "ml-1 bg-[#0a246a] text-white" : "ml-1"}>{text}</span>
    </li>
  );
}

function WinButtons() {
  const cls = "flex h-[14px] w-[15px] items-center justify-center border border-t-white border-l-white border-r-[#404040] border-b-[#404040] bg-[#d4d0c8]";
  return (
    <div className="flex pr-[2px]">
      <button type="button" aria-label="Minimize" className={cls}><svg viewBox="0 0 10 9" className="h-[9px] w-[10px]"><path d="M1 7h6v2H1z" /></svg></button>
      <button type="button" aria-label="Restore" className={cls}><svg viewBox="0 0 10 9" className="h-[9px] w-[10px]" fill="none" stroke="#000"><path d="M3.500 3V.5h5v5H6M3 1.300h6M1.500 3.500h4.500v5H1.500zM1 4.300h5" /></svg></button>
      <button type="button" aria-label="Close" className={`${cls} ml-[3px]`}><svg viewBox="0 0 10 9" className="h-[9px] w-[10px]" fill="none" stroke="#000"><path d="M1.500 1l7 7M8.500 1l-7 7" strokeWidth="1.500" /></svg></button>
    </div>
  );
}

function Chevrons({ left }) {
  return (
    <button type="button" aria-label={left ? "Expand pane" : "Show more"} className="flex size-4 shrink-0 items-center justify-center rounded-full border border-[#a4bce0] bg-[#f0f6ff]">
      <svg viewBox="0 0 10 8" className="h-2 w-[10px]" fill="none" stroke="#1c3c90" strokeWidth="1.500">
        <path d={left ? "M4.500.5L1.500 4l3 3.500M8.500.5L5.500 4l3 3.500" : "M1.500.5l3 3.500-3 3.500M5.500.5l3 3.500-3 3.500"} />
      </svg>
    </button>
  );
}

function Model() {
  return (
    <svg viewBox="242 101 824 513" className="h-full w-full" fill="none" stroke="#000" strokeLinejoin="round" role="img" aria-label="Part model">
      <defs>
        <linearGradient id="tube" gradientUnits="userSpaceOnUse" x1="749" y1="373" x2="711" y2="436">
          <stop offset="0" stopColor="#dcdce4" /><stop offset=".16" stopColor="#cfcfd8" /><stop offset=".3" stopColor="#e0e0e6" /><stop offset=".44" stopColor="#fff" /><stop offset=".56" stopColor="#fdfdfd" /><stop offset=".78" stopColor="#dadae0" /><stop offset="1" stopColor="#c4c4ca" />
        </linearGradient>
        <linearGradient id="loftFill" gradientUnits="userSpaceOnUse" x1="605" y1="262" x2="535" y2="345">
          <stop offset="0" stopColor="#c0c0c8" /><stop offset=".22" stopColor="#e0e0e6" /><stop offset=".5" stopColor="#d0d0d6" /><stop offset=".75" stopColor="#f6f6f8" /><stop offset="1" stopColor="#dcdce0" />
        </linearGradient>
        <linearGradient id="inner" x1="0" y1="0" x2="1" y2="0">
          <stop offset="0" stopColor="#fff" /><stop offset=".6" stopColor="#e8e8ec" /><stop offset="1" stopColor="#c8c8cc" />
        </linearGradient>
        <clipPath id="holeClip"><ellipse cx="537" cy="286.500" rx="15.500" ry="13" /></clipPath>
      </defs>
      <path d="M572.500 242L621 295Q606 296 593 318 579 340 579 359L502 332z" fill="url(#loftFill)" />
      <path d="M621 295L877 450 836 516 579 359Q579 340 593 318 606 296 621 295z" fill="url(#tube)" stroke="none" />
      <path d="M547 226L572.500 242 502 332 476.500 316z" fill="#f4f4fc" />
      <path d="M476.500 316L502 332v7.500L476.500 324.500z" fill="#c0c0c4" />
      <path d="M502 332L579 354v5.500L502 339.500z" fill="#b4b4b8" />
      <path d="M621 295Q606 296 593 318 579 340 579 359M621 295L876 449M579 359L836 516" />
      <ellipse cx="537" cy="286.500" rx="15.500" ry="13" fill="#c0c0c8" />
      <ellipse cx="537" cy="294" rx="15.500" ry="13" fill="#fff" clipPath="url(#holeClip)" />
      <path d="M548 277v7q3 3 4 6" />
      <ellipse cx="537" cy="286.500" rx="15.500" ry="13" />
      <g transform="translate(856.500 483) rotate(-58.500)">
        <ellipse rx="38" ry="12" fill="#e8e8ec" />
        <ellipse rx="35.500" ry="10.500" fill="url(#inner)" strokeWidth="1.300" />
      </g>
      <g stroke="#0000c8">
        <path d="M856 482L836 470" />
        <path d="M832 467l7 1-2.500 4.500z" fill="#0000c8" />
        <path d="M856 476v12M851.500 482h9M852 478l8 8M860 478l-8 8M854 476l2 2 2-2" />
      </g>
    </svg>
  );
}

export default function App() {
  return (
    <div className="flex h-screen flex-col overflow-hidden bg-white pb-[2px] font-['Liberation_Sans',Arial,sans-serif] text-[11px] leading-[14px] text-black">
      <div className="flex min-h-0 flex-1 flex-col bg-[#d4d0c8]">
        <header className="flex h-[18px] shrink-0 items-center bg-linear-to-r from-[#808080] to-[#c0c0c0] pl-[2px]">
          <Icon name="logo" />
          <h1 className="ml-px flex-1 text-[12px] font-bold text-[#d4d0c8]">SolidWorks Office Premium 2006 - [Part1 *]</h1>
          <WinButtons />
        </header>
        <nav className="flex h-5 shrink-0 items-center pl-1">
          <Icon name="part" />
          <div className="flex flex-1 gap-[11px] pl-[5px] text-[#808080]">
            {["File", "Edit", "View", "Insert", "Tools", "Window", "Help"].map((m) => (
              <button key={m} type="button">{m}</button>
            ))}
          </div>
          <WinButtons />
        </nav>
        <div className="flex h-8 shrink-0 border-t border-[#808080] pl-px">
          {row1.map(([label, list]) => <Bar key={label} label={label} list={list} />)}
          <div className="flex-1 border-t border-white" />
        </div>
        <div className="flex h-[30px] shrink-0 overflow-hidden pl-px">
          {row2.map(([label, list]) => <Bar key={label} label={label} list={list} />)}
        </div>

        <div className="flex min-h-0 flex-1">
          <div className="flex w-[41px] shrink-0 flex-col overflow-hidden border-t border-white">
            <div role="toolbar" aria-label="Features" className="flex shrink-0 flex-col items-start border-b border-[#808080] pt-1 pb-[17px] pl-[2px]">
              <HGrip />
              <div className="h-[2px]" />
              <Items list={features} vertical />
              <div className="flex"><Tool name="refgeo" vertical /><Drop /></div>
              <div className="flex"><Tool name="curves" vertical /><Drop /></div>
            </div>
            <div role="toolbar" aria-label="Assembly" className="flex min-h-0 w-[30px] flex-1 flex-col items-start overflow-hidden border-t border-r border-t-white border-r-[#808080] pt-1 pl-[2px]">
              <HGrip />
              <div className="h-[2px]" />
              <Items list={["a1", "a2", "a3", "a4"]} vertical />
            </div>
          </div>

          <aside className="flex w-[200px] shrink-0 flex-col">
            <div className="h-[7px] shrink-0 border-t border-black"><div className="h-px bg-[#f4f2ec]" /></div>
            <div className="mr-[5px] flex min-h-0 flex-1 flex-col border-t border-r border-l-2 border-[#404040] border-r-[#808080] pl-[2px]">
              <div className="flex h-[26px] shrink-0 items-end border-r border-white">
                <button type="button" aria-label="Feature tree" className="flex h-[26px] w-[28px] items-center justify-center border-t border-r border-t-white border-r-[#606060]"><Icon name="part" /></button>
                <button type="button" aria-label="Properties" className="flex h-[24px] w-[27px] items-center justify-center border-t border-r border-b border-t-white border-r-[#606060] border-b-white"><Icon name="prop" /></button>
                <button type="button" aria-label="Configurations" className="flex h-[24px] w-[28px] items-center justify-center border-t border-r border-b border-l border-t-white border-r-[#606060] border-b-white border-l-white"><Icon name="config" /></button>
                <div className="flex h-full flex-1 items-center justify-end border-b border-white pr-[3px]"><Chevrons /></div>
              </div>
              <div className="min-h-0 flex-1 border-r-[3px] border-l border-[#d4d0c8] border-l-[#404040] bg-white">
                <ul role="tree" className="border-t border-t-[#404040] pb-px">
                  <li role="treeitem" className="flex h-[18px] items-center pl-[3px]"><Icon name="part" /><span className="ml-1">Part1</span></li>
                  {tree.map((item, i) => <TreeRow key={i} item={item} last={i === tree.length - 1} />)}
                </ul>
                <div className="h-[3px] border-b border-black bg-[#e8e040]" />
              </div>
            </div>
          </aside>

          <main className="flex min-w-0 flex-1 border-t border-l border-black bg-white">
            <div className="min-w-0 flex-1"><Model /></div>
            <div className={`flex w-4 shrink-0 flex-col ${dither}`}>
              <div className="h-[7px] border border-t-white border-l-white border-r-[#404040] border-b-[#404040] bg-[#d4d0c8]" />
              <button type="button" aria-label="Scroll up" className="flex h-4 items-center justify-center border border-t-white border-l-white border-r-[#404040] border-b-[#404040] bg-[#d4d0c8]">
                <svg viewBox="0 0 7 4" className="h-1 w-[7px]"><path d="M0 4h7L3.500 0z" fill="#808080" /></svg>
              </button>
            </div>
          </main>

          <div className="flex w-[29px] shrink-0 flex-col items-start border-l border-white pt-[27px]">
            <button type="button" aria-label="Resources" className="flex h-[26px] w-[20px] items-center justify-center rounded-r-sm border border-l-0 border-[#b4c4d4] bg-[#e8e6e0]"><Icon name="home" /></button>
            <button type="button" aria-label="Design library" className="flex h-[28px] w-[21px] items-center justify-center rounded-r-sm border-r-2 border-[#f08c20] bg-white"><Icon name="library" /></button>
            <button type="button" aria-label="File explorer" className="flex h-[26px] w-[20px] items-center justify-center rounded-r-sm border border-l-0 border-[#b4c4d4] bg-[#e8e6e0]"><Icon name="search" /></button>
            <div className="mt-1 ml-[3px]"><Chevrons left /></div>
            <div className="mt-[7px] ml-[7px] flex flex-1">
              <div className="w-1 border-r border-l border-l-[#808080] border-r-white" />
              <div className="w-1 border-r border-l border-l-[#808080] border-r-white" />
            </div>
          </div>

          <div role="toolbar" aria-label="Sketch" className="flex w-[39px] shrink-0 flex-col items-start overflow-hidden border-t border-white pt-1">
            <HGrip />
            <div className="h-[3px]" />
            <Items list={sketchTools} vertical />
            <div className="flex"><Tool name="quick" vertical /><Drop muted /></div>
            <Items list={sketchTools2} vertical />
          </div>
        </div>
      </div>
    </div>
  );
}
